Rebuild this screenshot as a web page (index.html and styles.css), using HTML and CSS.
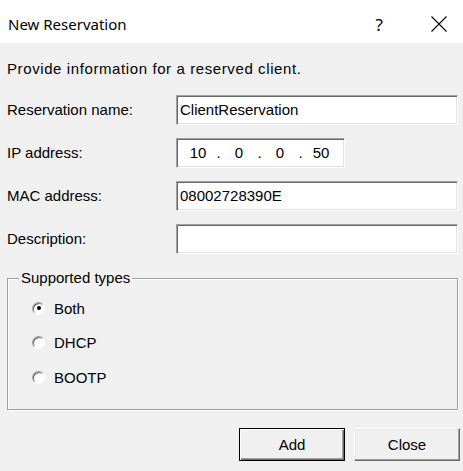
FILE: index.html
```html
<!DOCTYPE html>
<html>
<head>
<meta charset="utf-8">
<link rel="stylesheet" href="styles.css">
</head>
<body>
<div class="dialog">
  <div class="titlebar">
    <span class="title">New Reservation</span>
    <span class="tb-help">?</span>
    <span class="tb-close"><svg width="16" height="16" viewBox="0 0 16 16"><path d="M0.5 0.5 L15.5 15.5 M15.5 0.5 L0.5 15.5" stroke="#000" stroke-width="1.1" fill="none"/></svg></span>
  </div>
  <div class="content">
    <p class="intro">Provide information for a reserved client.</p>
    <div class="form">
      <label class="lbl">Reservation name:</label>
      <div class="field wide">ClientReservation</div>
      <label class="lbl">IP address:</label>
      <div class="field ip">
        <span class="oct">10</span><span class="dot">.</span><span class="oct">0</span><span class="dot">.</span><span class="oct">0</span><span class="dot">.</span><span class="oct">50</span>
      </div>
      <label class="lbl">MAC address:</label>
      <div class="field wide">08002728390E</div>
      <label class="lbl">Description:</label>
      <div class="field wide"></div>
    </div>
    <div class="group">
      <span class="legend">Supported types</span>
      <div class="radio"><span class="rb checked"></span><span>Both</span></div>
      <div class="radio"><span class="rb"></span><span>DHCP</span></div>
      <div class="radio"><span class="rb"></span><span>BOOTP</span></div>
    </div>
    <div class="buttons">
      <div class="btn default"><span>Add</span></div>
      <div class="btn"><span>Close</span></div>
    </div>
  </div>
</div>
</body>
</html>
```
FILE: styles.css
```css
html, body {
  margin: 0;
  padding: 0;
  width: 463px;
  height: 471px;
  overflow: hidden;
  background: #f0f0f0;
}
.dialog {
  width: 463px;
  height: 471px;
  font-family: "Liberation Sans", Arial, sans-serif;
  font-size: 15px;
  color: #000;
}
.titlebar {
  height: 43px;
  box-sizing: border-box;
  padding-top: 5px;
  background: #fff;
  display: flex;
  align-items: center;
  font-family: "Noto Sans", "Open Sans", sans-serif;
  font-size: 15px;
}
.title {
  margin-left: 8px;
  flex: 1;
}
.tb-help {
  font-size: 17px;
  margin-right: 48px;
}
.tb-close {
  display: flex;
  margin-right: 16px;
}
.content {
  padding: 0 3px 0 7px;
}
.intro {
  margin: 0;
  padding-top: 17px;
  line-height: 18px;
  height: 52px;
  box-sizing: border-box;
  letter-spacing: 0.6px;
}
.form {
  display: grid;
  grid-template-columns: 169px 282px;
  grid-auto-rows: 30px;
  row-gap: 13px;
  align-items: center;
}
.lbl {
  position: relative;
  top: -1px;
}
.field {
  height: 30px;
  box-sizing: border-box;
  background: #fff;
  border: 1px solid;
  border-color: #a0a0a0 #fff #fff #a0a0a0;
  box-shadow: inset 1px 1px #696969, inset -1px -1px #e3e3e3;
  padding: 0 3px 2px 3px;
  display: flex;
  align-items: center;
}
.field.ip {
  width: 169px;
  padding: 0 0 2px 4px;
}
.oct {
  width: 34px;
  text-align: center;
}
.dot {
  width: 7px;
  text-align: center;
}
.group {
  position: relative;
  margin-top: 24px;
  width: 451px;
  height: 132px;
  box-sizing: border-box;
  border: 1px solid #a0a0a0;
  box-shadow: 1px 1px #fff, inset 1px 1px #fff;
  padding-top: 12px;
}
.legend {
  position: absolute;
  left: 11px;
  top: -10px;
  padding: 0 2px;
  line-height: 18px;
  background: #f0f0f0;
}
.radio {
  display: flex;
  align-items: center;
  height: 34.5px;
  padding-left: 24px;
}
.rb {
  width: 13px;
  height: 13px;
  box-sizing: border-box;
  border-radius: 50%;
  background: #fff;
  border: 1px solid;
  border-color: #a0a0a0 #fff #fff #a0a0a0;
  box-shadow: inset 1px 1px #696969;
  margin-right: 9px;
  display: flex;
  align-items: center;
  justify-content: center;
}
.rb.checked::after {
  content: "";
  width: 4px;
  height: 4px;
  border-radius: 50%;
  background: #000;
}
.buttons {
  display: flex;
  justify-content: flex-end;
  gap: 9px;
  margin-top: 18px;
}
.btn {
  width: 106px;
  height: 33px;
  box-sizing: border-box;
  border: 1px solid;
  border-color: #fff #696969 #696969 #fff;
  box-shadow: inset -1px -1px #a0a0a0, inset 1px 1px #e3e3e3;
  display: flex;
  align-items: center;
  justify-content: center;
}
.btn.default {
  border: 1px solid #000;
  box-shadow: inset 1px 1px #fff, inset -1px -1px #696969, inset -2px -2px #a0a0a0;
}
```
